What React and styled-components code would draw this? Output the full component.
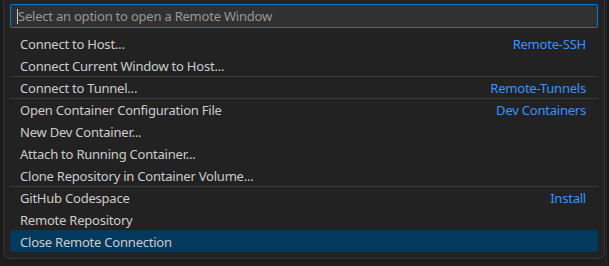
import React from 'react'
import styled, { createGlobalStyle } from 'styled-components'

const Global = createGlobalStyle`
  html, body {
    margin: 0;
    padding: 0;
    background: #1f1f1f;
    width: 609px;
    height: 266px;
    overflow: hidden;
  }
  * { box-sizing: border-box; }
`

const groups = [
  [
    { label: 'Connect to Host...', desc: 'Remote-SSH' },
    { label: 'Connect Current Window to Host...' },
  ],
  [{ label: 'Connect to Tunnel...', desc: 'Remote-Tunnels' }],
  [
    { label: 'Open Container Configuration File', desc: 'Dev Containers' },
    { label: 'New Dev Container...' },
    { label: 'Attach to Running Container...' },
    { label: 'Clone Repository in Container Volume...' },
  ],
  [
    { label: 'GitHub Codespace', desc: 'Install' },
    { label: 'Remote Repository' },
  ],
  [{ label: 'Close Remote Connection', selected: true }],
]

function App() {
  return (
    <>
      <Global />
      <Page>
        <Widget>
          <InputBox>
            <Caret />
            <Placeholder>Select an option to open a Remote Window</Placeholder>
          </InputBox>
          <List>
            {groups.map((g, gi) =>
              g.map((item, i) => (
                <Row
                  key={gi + '-' + i}
                  $sep={gi > 0 && i === 0 && !item.selected}
                  $selected={item.selected}
                >
                  <Label>{item.label}</Label>
                  {item.desc && <Desc>{item.desc}</Desc>}
                </Row>
              ))
            )}
          </List>
        </Widget>
        <SideStrip />
      </Page>
    </>
  )
}

const Page = styled.div`
  display: flex;
  width: 609px;
  height: 266px;
  padding-left: 3px;
  font-family: 'Noto Sans', 'Open Sans', sans-serif;
  font-size: 13px;
  letter-spacing: -0.22px;
`

const Widget = styled.div`
  width: 602px;
  height: 259px;
  background: #222222;
  border: 1px solid #353535;
  border-top: none;
  border-radius: 0 0 6px 6px;
  padding: 4px 6px 0 6px;
  box-shadow: 0 0 8px rgba(0, 0, 0, 0.36);
`

const SideStrip = styled.div`
  flex: 1;
  background: #181818;
  border-left: 1px solid #2b2b2b;
  margin-left: 1px;
`

const InputBox = styled.div`
  display: flex;
  align-items: center;
  height: 24px;
  background: #313131;
  border: 1px solid #0078d4;
  border-radius: 2px;
  padding-left: 6px;
`

const Caret = styled.span`
  width: 1px;
  height: 15px;
  background: #cccccc;
`

const Placeholder = styled.span`
  color: #989898;
  line-height: 22px;
`

const List = styled.div`
  margin-top: 4px;
  display: flex;
  flex-direction: column;
`

const Row = styled.div`
  display: flex;
  align-items: center;
  justify-content: space-between;
  height: 22px;
  padding: 0 12px 0 10px;
  color: #cccccc;
  border-radius: ${(p) => (p.$selected ? '3px' : '0')};
  background: ${(p) => (p.$selected ? '#04395e' : 'transparent')};
  border-top: 1px solid ${(p) => (p.$sep ? '#3c3c3c' : 'transparent')};
`

const Label = styled.span`
  white-space: nowrap;
`

const Desc = styled.span`
  color: #3794ff;
  white-space: nowrap;
`

export default App
